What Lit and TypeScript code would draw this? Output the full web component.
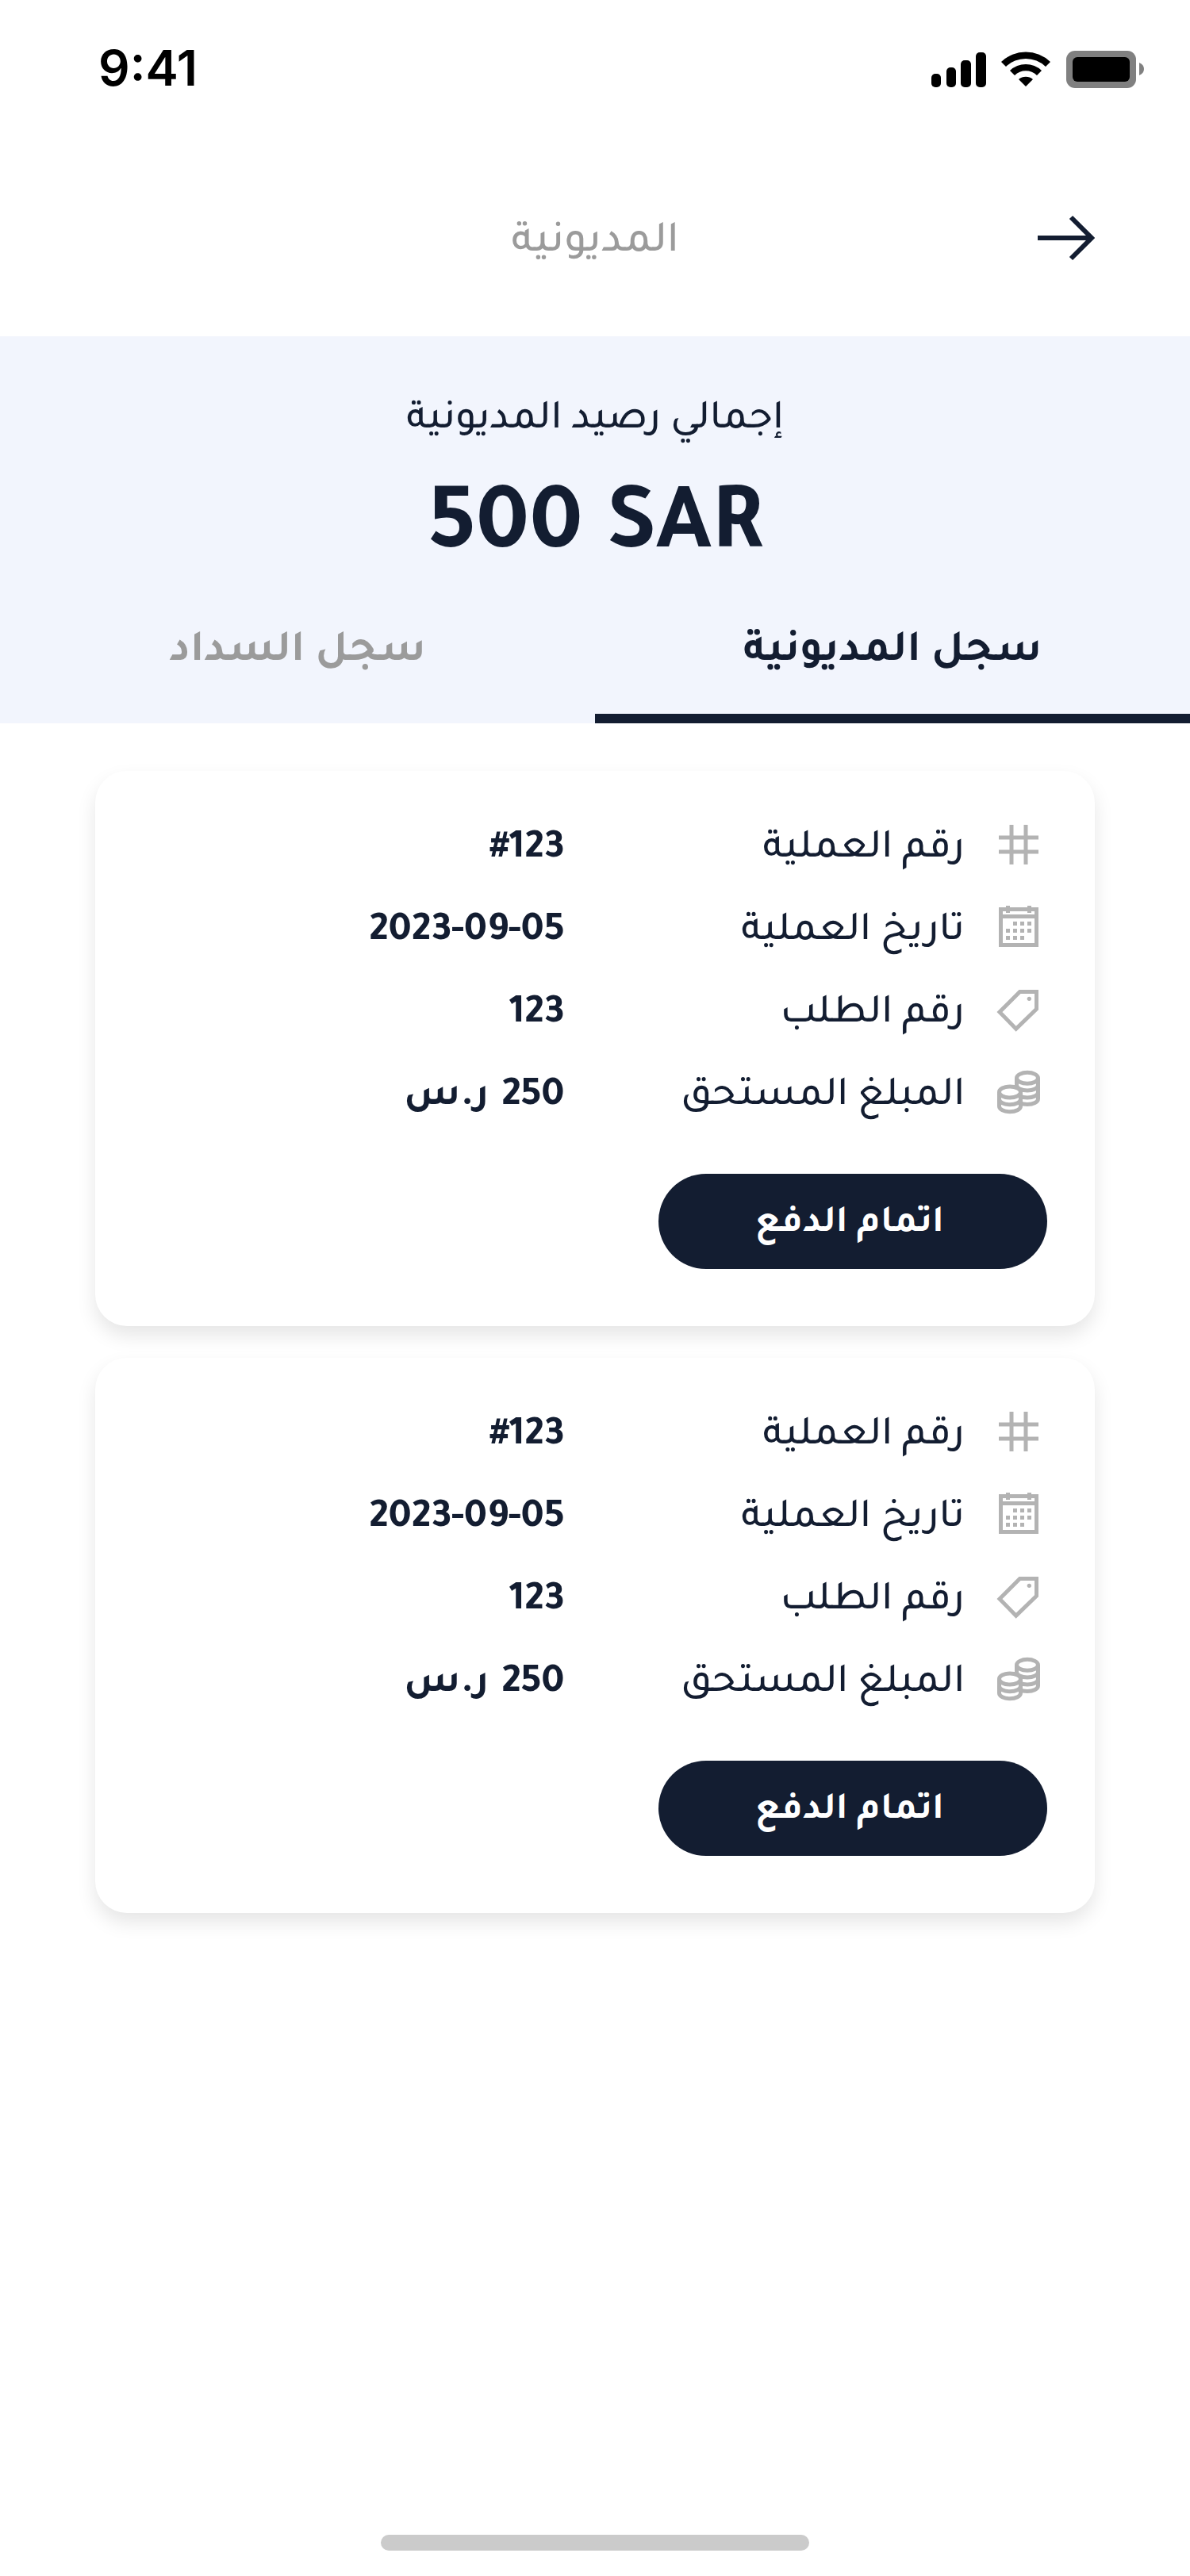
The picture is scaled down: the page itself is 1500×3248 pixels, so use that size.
import { LitElement, html, svg, css } from "lit";
import { customElement, state } from "lit/decorators.js";

type Row = { icon: string; label: string; value: string; unit?: string };

const ROWS: Row[] = [
  { icon: "hash", label: "رقم العملية", value: "#123" },
  { icon: "calendar", label: "تاريخ العملية", value: "2023-09-05" },
  { icon: "tag", label: "رقم الطلب", value: "123" },
  { icon: "coins", label: "المبلغ المستحق", value: "250", unit: "ر.س" },
];

const TABS = ["سجل المديونية", "سجل السداد"];

const ICONS: Record<string, unknown> = {
  hash: svg`<path d="M27 12V62M45 12V62M11 28H61M11 46H61"/>`,
  calendar: svg`
    <path d="M13.500 14.500H58.500V59.500H13.500ZM13 23.500H59M22.500 10V19M49.500 10V19"/>
    <path d="M29 32.500h5M38 32.500h5M47 32.500h5M20 41.500h5M29 41.500h5M38 41.500h5M47 41.500h5M20 50.500h5M29 50.500h5M38 50.500h5"/>`,
  tag: svg`<path d="M12 40L37.500 14.500H58.500V36.300L32.700 61.200Z"/><circle class="dot" cx="49.300" cy="23.300" r="2.600"/>`,
  coins: svg`
    <path class="cover" d="M33.500 19.300V45.500C33.500 49.500 39.500 52.500 47 52.500S60.500 49.500 60.500 45.500V19.300"/>
    <ellipse cx="47" cy="19.300" rx="13.500" ry="7"/>
    <path d="M33.500 28C33.500 32 39.500 35 47 35S60.500 32 60.500 28M33.500 37C33.500 41 39.500 44 47 44S60.500 41 60.500 37"/>
    <path class="cover" d="M11.500 37V54.700C11.500 58.700 17.500 61.700 25 61.700S38.500 58.700 38.500 54.700V37"/>
    <ellipse class="cover" cx="25" cy="37" rx="13.500" ry="7"/>
    <path d="M11.500 45.700C11.500 49.700 17.500 52.700 25 52.700S38.500 49.700 38.500 45.700"/>`,
};

@customElement("app-root")
export class AppRoot extends LitElement {
  @state() private tab = 0;

  static styles = css`
    :host {
      display: block;
      font-family: Tajawal, "Open Sans", "DejaVu Sans", sans-serif;
      font-weight: 500;
      color: #131d31;
      background: #fff;
    }
    * { box-sizing: border-box; margin: 0; }
    button { cursor: pointer; }
    .screen { min-height: 100vh; display: flex; flex-direction: column; }
    .status { display: flex; justify-content: space-between; align-items: center; height: 176px; padding: 0 56px 0 124px; color: #000; }
    .time { font: 600 62px/72px Inter, sans-serif; padding-bottom: 4px; }
    .status-icons { display: block; width: 272px; height: 48px; }
    .shell { fill: #808080; }
    .top { display: grid; grid-template-columns: 1fr auto 1fr; align-items: center; height: 248px; padding: 0 120px; }
    .back { justify-self: start; display: flex; padding: 0; border: 0; background: none; }
    .back svg { width: 72px; height: 72px; fill: none; stroke: #131d31; stroke-width: 6; }
    h1 { padding-top: 16px; font-size: 56px; line-height: 72px; font-weight: 500; color: #9b9b9b; }
    .hero { background: #f2f5fd; padding-top: 72px; text-align: center; }
    .caption { font-size: 52px; line-height: 72px; }
    .total { font-size: 120px; line-height: 144px; font-weight: 700; margin-top: 32px; }
    .tabs { display: grid; grid-template-columns: 1fr 1fr; }
    .tab { height: 168px; padding: 4px 0 0; border: 0; border-bottom: 12px solid transparent; background: none; font: inherit; font-size: 56px; font-weight: 700; color: #9b9b9b; }
    .tab.on { color: #131d31; border-color: #131d31; }
    .list { flex: 1; display: flex; flex-direction: column; gap: 40px; padding: 60px 120px; }
    .card { border-radius: 40px; background: #fff; box-shadow: 0 12px 24px rgba(0, 0, 0, 0.1); padding: 56px 60px 72px; }
    .rows { display: grid; gap: 32px; }
    .row { display: grid; grid-template-columns: 72px 8fr 9fr; column-gap: 32px; align-items: center; line-height: 54px; font-size: 52px; }
    dt, dd { padding-top: 18px; }
    .icon { display: block; width: 72px; height: 72px; fill: none; stroke: #b3b3b3; stroke-width: 5; }
    .dot { fill: #b3b3b3; stroke: none; }
    .cover { fill: #fff; }
    .value { display: flex; gap: 16px; font-weight: 700; }
    .pay { display: block; width: 43%; height: 120px; margin-top: 68px; padding: 10px 8px 0 0; border: 0; border-radius: 60px; background: #131d31; color: #fff; font: inherit; font-size: 48px; font-weight: 700; }
    .home { align-self: center; width: 36%; height: 20px; margin-bottom: 32px; border-radius: 10px; background: #cbcbcb; }
  `;

  private card() {
    return html`<article class="card">
      <dl class="rows">
        ${ROWS.map(
          (r) => html`<div class="row">
            <svg class="icon" viewBox="0 0 72 72" aria-hidden="true">${ICONS[r.icon]}</svg>
            <dt>${r.label}</dt>
            <dd class="value"><bdi dir="ltr">${r.value}</bdi>${r.unit ? html`<bdi>${r.unit}</bdi>` : ""}</dd>
          </div>`
        )}
      </dl>
      <button class="pay" type="button">اتمام الدفع</button>
    </article>`;
  }

  render() {
    return html`<div class="screen">
      <div class="status">
        <span class="time">9:41</span>
        <svg class="status-icons" viewBox="0 0 272 48" aria-hidden="true">
          <rect x="2" y="29" width="12" height="17" rx="5"/>
          <rect x="21" y="21" width="12" height="25" rx="5"/>
          <rect x="39" y="12" width="13" height="34" rx="5"/>
          <rect x="58" y="2" width="13" height="44" rx="5"/>
          <path d="M90 14A45 45 0 0 1 152 14L146 20A36 36 0 0 0 96 20Z M101 25A29 29 0 0 1 141 25L135 31A20 20 0 0 0 107 31Z M112 36A14 14 0 0 1 130 36L121 45Z"/>
          <rect class="shell" x="172" y="0" width="88" height="47" rx="11"/>
          <rect x="180" y="8" width="72" height="31" rx="6"/>
          <path class="shell" d="M264 15C272 18 272 28 264 31Z"/>
        </svg>
      </div>
      <header class="top" dir="rtl">
        <button class="back" type="button" aria-label="رجوع">
          <svg viewBox="0 0 72 72" aria-hidden="true"><path d="M0 36H68M42 10L68 36L42 62"/></svg>
        </button>
        <h1>المديونية</h1>
      </header>
      <section class="hero" dir="rtl">
        <p class="caption">إجمالي رصيد المديونية</p>
        <p class="total" dir="ltr">500 SAR</p>
        <div class="tabs" role="tablist">
          ${TABS.map(
            (t, i) => html`<button
              class="tab ${this.tab === i ? "on" : ""}"
              type="button"
              role="tab"
              aria-selected=${this.tab === i ? "true" : "false"}
              @click=${() => (this.tab = i)}
            >${t}</button>`
          )}
        </div>
      </section>
      <main class="list" dir="rtl">${this.card()}${this.card()}</main>
      <div class="home"></div>
    </div>`;
  }
}
